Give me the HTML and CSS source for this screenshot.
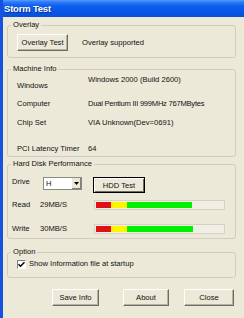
FILE: index.html
```html
<!DOCTYPE html>
<html>
<head>
<meta charset="utf-8">
<link rel="stylesheet" href="styles.css">
</head>
<body>
<div class="window">
  <div class="titlebar"><span class="title">Storm Test</span></div>
  <div class="client">
    <fieldset class="group g-overlay">
      <legend>Overlay</legend>
      <div class="overlay-row">
        <button class="btn btn-overlay">Overlay Test</button>
        <span class="status">Overlay supported</span>
      </div>
    </fieldset>

    <fieldset class="group g-machine">
      <legend>Machine Info</legend>
      <div class="info">
        <div class="info-row r1"><span class="lbl lbl-low">Windows</span><span class="val val-high">Windows 2000 (Build 2600)</span></div>
        <div class="info-row r2"><span class="lbl">Computer</span><span class="val val-narrow">Dual Pentium III 999MHz 767MBytes</span></div>
        <div class="info-row r3"><span class="lbl">Chip Set</span><span class="val">VIA Unknown(Dev=0691)</span></div>
        <div class="info-row r4"><span class="lbl">PCI Latency Timer</span><span class="val">64</span></div>
      </div>
    </fieldset>

    <fieldset class="group g-hdd">
      <legend>Hard Disk Performance</legend>
      <div class="hdd">
        <span class="hlbl">Drive</span>
        <div class="combo"><span class="combo-text">H</span><span class="combo-btn"><svg width="5" height="3" viewBox="0 0 5 3"><path d="M0 0H5L2.5 3Z" fill="#000"/></svg></span></div>
        <button class="btn btn-default btn-hdd">HDD Test</button>

        <span class="hlbl row-read">Read</span>
        <span class="hval row-read">29MB/S</span>
        <div class="bar row-read"><span class="seg red"></span><span class="seg yellow"></span><span class="seg green" style="width:65px"></span></div>

        <span class="hlbl row-write">Write</span>
        <span class="hval row-write">30MB/S</span>
        <div class="bar row-write"><span class="seg red"></span><span class="seg yellow"></span><span class="seg green" style="width:66px"></span></div>
      </div>
    </fieldset>

    <fieldset class="group g-option">
      <legend>Option</legend>
      <label class="check-row"><span class="checkbox"><svg width="7" height="7" viewBox="0 0 7 7"><path d="M0.5 3.2L2.5 5.2L6.5 1.2" stroke="#000" stroke-width="1.5" fill="none"/></svg></span><span>Show Information file at startup</span></label>
    </fieldset>

    <div class="actions">
      <button class="btn btn-save">Save Info</button>
      <button class="btn btn-about">About</button>
      <button class="btn btn-close">Close</button>
    </div>
  </div>
</div>
</body>
</html>
```
FILE: styles.css
```css
html, body {
  margin: 0;
  padding: 0;
}
body {
  width: 244px;
  height: 318px;
  overflow: hidden;
  background: #ECE9D8;
  font-family: "Liberation Sans", Arial, sans-serif;
  font-size: 7.6px;
  color: #111;
}
.window {
  height: 318px;
  border-left: 3px solid #1651E0;
  box-sizing: border-box;
  background: #ECE9D8;
}
.titlebar {
  height: 17px;
  background: linear-gradient(to bottom, #5A9BFF 0%, #2E7AF8 12%, #0E5FEE 35%, #0755E6 70%, #0A4FD8 100%);
  display: flex;
  align-items: center;
  padding-left: 1px;
}
.title {
  color: #fff;
  font-weight: bold;
  font-size: 9.5px;
  letter-spacing: -0.2px;
  text-shadow: 1px 1px 0 #0A2E8A;
}
.client {
  padding-left: 4px;
  padding-right: 8px;
}
.group {
  margin: 0;
  padding: 0;
  border: 1px solid #D0CDBE;
  border-radius: 3px;
  min-width: 0;
}
.group legend {
  margin-left: 3px;
  padding: 0 2px;
  line-height: 10px;
  height: 10px;
  font-size: 7.6px;
}
.g-overlay { margin-top: 3px; }
.g-machine { margin-top: 6px; }
.g-hdd { margin-top: 2px; }
.g-option { margin-top: 8px; }

.overlay-row {
  display: flex;
  align-items: center;
  padding: 4px 0 6px 9px;
}
.status { margin-left: 14px; }

.btn {
  font-family: "Liberation Sans", Arial, sans-serif;
  font-size: 7.6px;
  color: #111;
  background: #ECE9D8;
  height: 17px;
  padding: 0;
  border: 1px solid;
  border-color: #FFFFFF #6E6C62 #6E6C62 #FFFFFF;
  box-shadow: inset -1px -1px 0 #B5B2A3;
  box-sizing: border-box;
}
.btn-overlay { width: 51px; }
.btn-default {
  border: 1px solid #000;
  box-shadow: inset 1px 1px 0 #fff, inset -1px -1px 0 #6E6C62;
}
.btn-hdd { width: 52px; height: 16px; }

.info {
  display: flex;
  flex-direction: column;
  padding: 1px 0 2px 9px;
}
.info-row {
  display: grid;
  grid-template-columns: 71px 1fr;
  line-height: 10px;
}
.r1 { height: 16px; }
.r2 { margin-top: 8px; }
.r3 { margin-top: 9px; }
.r4 { margin-top: 16px; }
.lbl-low { align-self: end; }
.val-high { align-self: start; }
.val-narrow { letter-spacing: -0.25px; }

.hdd {
  display: grid;
  grid-template-columns: 28px 53px 1fr;
  grid-template-rows: 16px 10px 10px;
  row-gap: 7px;
  padding: 8px 0 11px 4px;
  line-height: 10px;
  align-items: start;
}
.row-write { margin-top: 7px; }
.combo {
  margin-left: 3px;
  width: 39px;
  height: 13px;
  box-sizing: border-box;
  background: #fff;
  border: 1px solid #8A8A84;
  display: flex;
  align-items: center;
  justify-content: space-between;
  padding-left: 2px;
}
.combo-text { line-height: 10px; }
.combo-btn {
  width: 9px;
  height: 11px;
  display: flex;
  align-items: center;
  justify-content: center;
  background: #ECE9D8;
  border-left: 1px solid #fff;
  box-shadow: inset -1px -1px 0 #808080;
}
.bar {
  margin-left: 1px;
  width: 131px;
  height: 10px;
  box-sizing: border-box;
  border: 1px solid #D6D3C6;
  background: #F0EEE5;
  display: flex;
  padding: 1px;
}
.seg { height: 100%; }
.red { width: 15px; background: #E0101A; }
.yellow { width: 16px; background: #FFF500; }
.green { background: #00F000; }

.check-row {
  display: flex;
  align-items: center;
  padding: 2px 0 8px 9px;
  line-height: 10px;
}
.checkbox {
  width: 9px;
  height: 9px;
  box-sizing: border-box;
  border: 1px solid;
  border-color: #808080 #fff #fff #808080;
  background: #fff;
  display: flex;
  align-items: center;
  justify-content: center;
  margin-right: 3px;
}

.actions {
  display: flex;
  margin-top: 11px;
  padding-left: 45px;
}
.btn-save { width: 47px; }
.btn-about { width: 46px; margin-left: 24px; }
.btn-close { width: 50px; margin-left: 15px; }
```
